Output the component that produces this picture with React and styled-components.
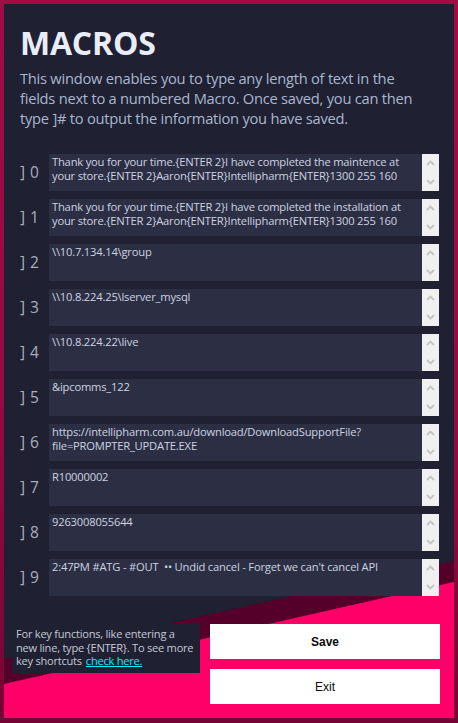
import React from "react";
import styled, { createGlobalStyle } from "styled-components";

const GlobalStyle = createGlobalStyle`
  html, body { margin: 0; padding: 0; background: #1f2032; }
  * { box-sizing: border-box; }
`;

const Frame = styled.div`
  width: 458px;
  height: 723px;
  padding: 4px 4px 5px 4px;
  background: linear-gradient(180deg, #a30b43 0%, #950a3e 60%, #760433 100%);
`;

const Inner = styled.div`
  position: relative;
  width: 100%;
  height: 100%;
  background: #1f2032;
  overflow: hidden;
`;

const Backdrop = styled.svg`
  position: absolute;
  left: 0;
  top: 0;
  width: 450px;
  height: 714px;
  z-index: 0;
`;

const Content = styled.div`
  position: relative;
  z-index: 1;
  display: flex;
  flex-direction: column;
  padding: 23px 15px 0 16px;
  font-family: "Open Sans", "Noto Sans", sans-serif;
`;

const Title = styled.h1`
  margin: 0;
  font-size: 32px;
  line-height: 32px;
  font-weight: 700;
  color: #e9edf8;
  letter-spacing: -0.2px;
`;

const Description = styled.p`
  margin: 9px 0 0 0;
  font-size: 14.7px;
  line-height: 20px;
  color: #a9b7cf;
  letter-spacing: -0.25px;
  white-space: nowrap;
`;

const Rows = styled.div`
  display: flex;
  flex-direction: column;
  gap: 8px;
  margin-top: 26px;
`;

const Row = styled.div`
  display: flex;
  align-items: center;
  height: 37px;
`;

const Label = styled.div`
  width: 29px;
  flex: none;
  font-size: 15.5px;
  color: #a7afbd;
  padding-bottom: 2px;
  letter-spacing: 0.5px;
`;

const Field = styled.div`
  flex: 1;
  height: 37px;
  display: flex;
  background: #2c2e44;
`;

const FieldText = styled.div`
  flex: 1;
  padding: 1px 3px 0 3px;
  font-size: 11.2px;
  line-height: 14px;
  color: #cdd3e0;
  white-space: pre;
  overflow: hidden;
  letter-spacing: -0.2px;
`;

const ScrollBar = styled.div`
  width: 17px;
  flex: none;
  background: #f0f0f0;
  display: flex;
  flex-direction: column;
  justify-content: space-between;
  align-items: center;
  padding: 6px 0 6px 0;
`;

const Bottom = styled.div`
  display: flex;
  align-items: flex-start;
  margin: 27px 0 0 -8px;
  gap: 10px;
`;

const KeyBox = styled.div`
  width: 188px;
  height: 50px;
  flex: none;
  background: #1f2032;
  padding: 4px 2px 0 4px;
  font-size: 11.1px;
  line-height: 13.5px;
  color: #c4c9d5;
  letter-spacing: -0.25px;
  white-space: nowrap;
`;

const KeyLink = styled.a`
  color: #00f0ff;
  text-decoration: underline;
  margin-left: 4px;
  cursor: pointer;
`;

const Buttons = styled.div`
  display: flex;
  flex-direction: column;
  gap: 10px;
  width: 230px;
  flex: none;
  margin-top: 1px;
`;

const Button = styled.button`
  height: 35px;
  border: none;
  background: #ffffff;
  color: #0a0a0a;
  font-family: "Liberation Sans", Arial, sans-serif;
  font-size: 12px;
  font-weight: ${(p) => (p.$primary ? 700 : 400)};
  cursor: pointer;
  padding: 0;
`;

const Chevron = ({ up }) => (
  <svg width="9" height="6" viewBox="0 0 9 6">
    <polyline
      points={up ? "1,5 4.5,1.5 8,5" : "1,1 4.5,4.5 8,1"}
      fill="none"
      stroke="#c4c4c4"
      strokeWidth="1.8"
    />
  </svg>
);

const macros = [
  "Thank you for your time.{ENTER 2}I have completed the maintence at\nyour store.{ENTER 2}Aaron{ENTER}Intellipharm{ENTER}1300 255 160",
  "Thank you for your time.{ENTER 2}I have completed the installation at\nyour store.{ENTER 2}Aaron{ENTER}Intellipharm{ENTER}1300 255 160",
  "\\\\10.7.134.14\\group",
  "\\\\10.8.224.25\\lserver_mysql",
  "\\\\10.8.224.22\\live",
  "&ipcomms_122",
  "https://intellipharm.com.au/download/DownloadSupportFile?\nfile=PROMPTER_UPDATE.EXE",
  "R10000002",
  "9263008055644",
  "2:47PM #ATG - #OUT  \u2022\u2022 Undid cancel - Forget we can't cancel API",
];

export default function App() {
  return (
    <>
      <GlobalStyle />
      <Frame>
        <Inner>
          <Backdrop viewBox="0 0 450 714">
            <polygon points="0,655 450,557 450,714 0,714" fill="#55002b" />
            <polygon points="0,680 450,578 450,714 0,714" fill="#ff0068" />
          </Backdrop>
          <Content>
            <Title>MACROS</Title>
            <Description>
              This window enables you to type any length of text in the
              <br />
              fields next to a numbered Macro. Once saved, you can then
              <br />
              type ]# to output the information you have saved.
            </Description>
            <Rows>
              {macros.map((m, i) => (
                <Row key={i}>
                  <Label>] {i}</Label>
                  <Field>
                    <FieldText>{m}</FieldText>
                    <ScrollBar>
                      <Chevron up />
                      <Chevron />
                    </ScrollBar>
                  </Field>
                </Row>
              ))}
            </Rows>
            <Bottom>
              <KeyBox>
                For key functions, like entering a
                <br />
                new line, type {"{ENTER}"}. To see more
                <br />
                key shortcuts<KeyLink>check here.</KeyLink>
              </KeyBox>
              <Buttons>
                <Button $primary>Save</Button>
                <Button>Exit</Button>
              </Buttons>
            </Bottom>
          </Content>
        </Inner>
      </Frame>
    </>
  );
}
